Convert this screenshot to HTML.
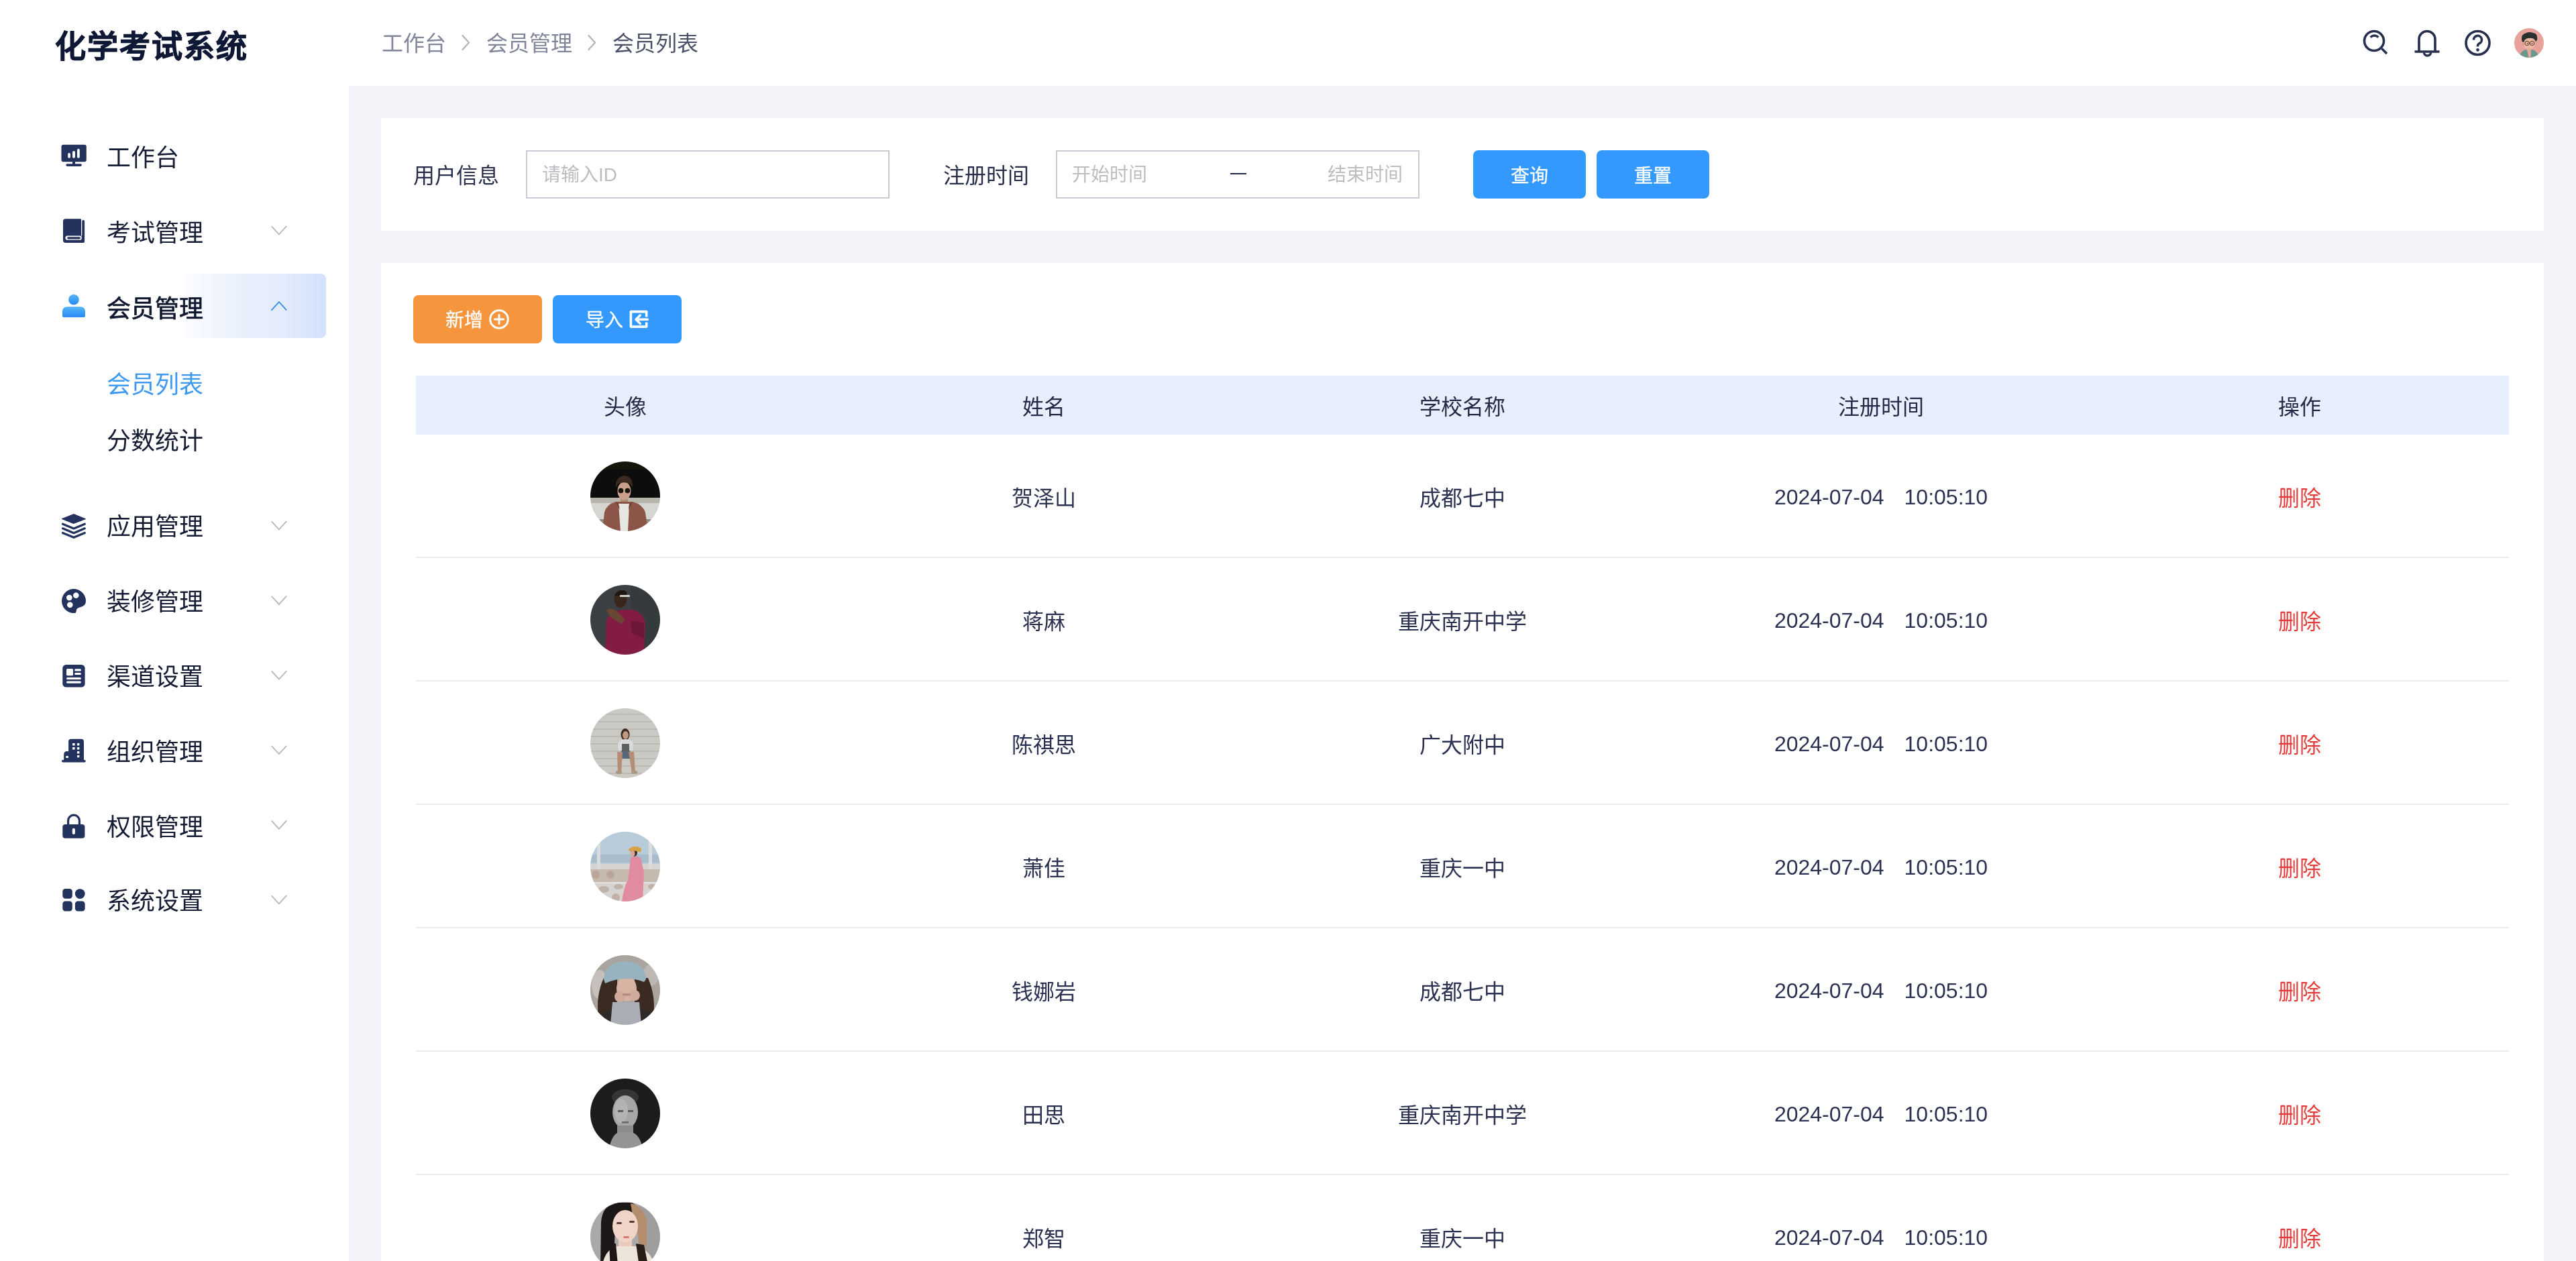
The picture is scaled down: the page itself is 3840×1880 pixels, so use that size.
<!DOCTYPE html>
<html lang="zh-CN">
<head>
<meta charset="utf-8">
<style>
*{box-sizing:border-box;margin:0;padding:0}
html,body{width:3840px;height:1880px;overflow:hidden;background:#fff}
body{position:relative;font-family:"Liberation Sans",sans-serif;color:#1b2238}
.t{position:absolute;white-space:nowrap;line-height:1}
.c{position:absolute;white-space:nowrap;line-height:1;text-align:center}
#main{position:absolute;left:520px;top:128px;width:3320px;height:1752px;background:#f2f3f9}
.card{position:absolute;background:#fff}
.logo{left:81.5px;top:45.5px;font-size:46px;letter-spacing:2px;font-weight:700;color:#0f1936;-webkit-text-stroke:0.9px #0f1936}
.bc{top:49px;font-size:32px;color:#80859a}
.menu{left:158.5px;font-size:36px;color:#141b33}
.lbl{font-size:32px;color:#282e4a;top:245.5px}
.inp{position:absolute;top:224px;height:72px;width:542px;border:2px solid #c9cbd1;background:#fff}
.ph{font-size:28px;color:#bcbdc1;top:247px}
.btn{position:absolute;height:72px;border-radius:8px}
.bt{font-size:28px;color:#fff;-webkit-text-stroke:0.3px #fff}
.th{font-size:32px;color:#252b47;top:590.5px;width:624px}
.td{font-size:32px;color:#2b3150;width:624px}
.del{color:#e23b3b}
.line{position:absolute;left:620px;width:3120px;height:2px;background:#e9eaee}
svg{position:absolute;overflow:visible}
</style>
</head>
<body><div style="position:absolute;left:0;top:0;width:3840px;height:1880px;will-change:transform">
<div id="main"></div>
<div class="card" style="left:568px;top:176px;width:3224px;height:168px"></div>
<div class="card" style="left:568px;top:392px;width:3224px;height:1488px"></div>

<div class="t logo">化学考试系统</div>
<div class="t bc" style="left:569px">工作台</div>
<div class="t bc" style="left:725px">会员管理</div>
<div class="t bc" style="left:912.5px;color:#4a5167">会员列表</div>
<svg style="left:0;top:0" width="3840" height="128" viewBox="0 0 3840 128">
<g fill="none" stroke="#b3b6be" stroke-width="2.4" stroke-linecap="round" stroke-linejoin="round">
<path d="M689.5 53 L699 63.5 L689.5 74"/>
<path d="M877.5 53 L887 63.5 L877.5 74"/>
</g>
<g fill="none" stroke="#262f4d" stroke-width="3.6" stroke-linecap="butt" stroke-linejoin="round">
<circle cx="3539" cy="61" r="14.5"/>
<path d="M3550.5 72.5 L3558 80"/>
<path d="M3533.5 55.5 Q3539.5 50.5 3545.5 55.5" stroke-width="3.5"/>
<path d="M3606 76 V58.5 A12 12 0 0 1 3630 58.5 V76"/>
<path d="M3599.5 77 H3636.5"/>
<path d="M3613.5 78.5 A5 4.5 0 0 0 3623.5 78.5" stroke-width="3.5"/>
<circle cx="3693.5" cy="64" r="17.5"/>
<path d="M3687.5 59.5 A6 6 0 1 1 3695.5 65 Q3693.5 66 3693.5 68.5 V69.5" stroke-width="3.6"/>
</g>
<circle cx="3693.5" cy="74.3" r="2.4" fill="#262f4d"/>
</svg>
<svg style="left:3748px;top:42px" width="44" height="44" viewBox="0 0 44 44">
<defs><clipPath id="hav"><circle cx="22" cy="22" r="22"/></clipPath></defs>
<g clip-path="url(#hav)">
<rect width="44" height="44" fill="#e7a39b"/>
<path d="M7 44 Q9 34 17 32 L27 32 Q35 34 37 44 Z" fill="#6a988a"/>
<path d="M19 32 L21.5 44 L24.5 44 L25 32 Z" fill="#eaa7a0"/>
<ellipse cx="22" cy="23" rx="8.5" ry="9" fill="#eeb8a2"/>
<rect x="19" y="29" width="6" height="4" fill="#e8ae98"/>
<ellipse cx="13.5" cy="24" rx="1.6" ry="2.2" fill="#e29a86"/>
<path d="M11 17 Q10 9 17 7.5 Q22 5 28 7 Q34 8 34 13 Q35 18 32 20 Q30 15 26 15 Q20 14 16 17 L14 21 Q11 20 11 17 Z" fill="#283130"/>
<g fill="none" stroke="#3a2a24" stroke-width="0.9"><circle cx="19" cy="22.5" r="3.2"/><circle cx="26.5" cy="22.5" r="3.2"/><path d="M22.2 22.3 H23.3"/></g>
<circle cx="19.5" cy="22.8" r="0.8" fill="#2a1a14"/><circle cx="26.5" cy="22.8" r="0.8" fill="#2a1a14"/>
</g></svg>
<div style="position:absolute;left:268px;top:408px;width:218px;height:96px;border-radius:0 8px 8px 0;background:linear-gradient(90deg,#ffffff 0%,#f5f8fe 15%,#e9f0fc 42%,#e2ebfc 72%,#d3e1fa 100%)"></div>
<div class="t menu" style="top:218.0px">工作台</div>
<div class="t menu" style="top:330.0px">考试管理</div>
<div class="t menu" style="top:442.5px;-webkit-text-stroke:0.7px #141b33;color:#101830">会员管理</div>
<div class="t menu" style="top:768.0px">应用管理</div>
<div class="t menu" style="top:879.5px">装修管理</div>
<div class="t menu" style="top:992.2px">渠道设置</div>
<div class="t menu" style="top:1103.9px">组织管理</div>
<div class="t menu" style="top:1216.2px">权限管理</div>
<div class="t menu" style="top:1325.7px">系统设置</div>
<div class="t menu" style="top:556.2px;color:#3d98ef">会员列表</div>
<div class="t menu" style="top:640.0px">分数统计</div>
<svg style="left:0;top:0" width="520" height="1400" viewBox="0 0 520 1400">
<defs><linearGradient id="pg" x1="0" y1="0" x2="0" y2="1"><stop offset="0" stop-color="#55b6f6"/><stop offset="1" stop-color="#2889f4"/></linearGradient></defs>
<g fill="#24325e">
<!-- monitor -->
<rect x="91.5" y="215.7" width="37.3" height="25.5" rx="3"/>
<rect x="108" y="240" width="4" height="5"/>
<rect x="98.3" y="244.3" width="23.6" height="3.6" rx="1.8"/>
</g>
<g fill="#fff">
<rect x="101.2" y="228" width="3.8" height="7.7" rx="1.9"/>
<rect x="108" y="225" width="4" height="10.7" rx="2"/>
<rect x="115" y="221.7" width="3.8" height="14" rx="1.9"/>
</g>
<!-- book -->
<g fill="#24325e">
<path d="M98 326.2 H119.8 Q121 326.2 121 327.4 V352 H98 Q94 352 94 356 V330.2 Q94 326.2 98 326.2 Z"/>
<path d="M122.3 329.7 Q122.3 328 124.2 328 Q126.1 328 126.1 329.9 V360 Q126.1 362 124.1 362 H98 Q94 362 94 358 V352 L98 351.6 H122.3 Z"/>
</g>
<rect x="97.5" y="351.5" width="24.4" height="6.3" rx="3.1" fill="#fff"/>
<rect x="100.2" y="353.2" width="19.8" height="3.2" rx="1.6" fill="#24325e"/>
<!-- person -->
<circle cx="110" cy="446.8" r="7.8" fill="url(#pg)"/>
<path d="M100.5 457.2 H119.5 Q127 457.2 127 465 V471 Q127 473 125 473 H95 Q93 473 93 471 V465 Q93 457.2 100.5 457.2 Z" fill="url(#pg)"/>
<!-- layers -->
<g fill="#24325e">
<path d="M92.2 773.5 L110 766.6 L127.6 773.7 L109.6 780.6 Z" stroke="#24325e" stroke-width="1" stroke-linejoin="round"/>
</g>
<g fill="none" stroke="#24325e" stroke-width="3.2" stroke-linecap="round" stroke-linejoin="round">
<path d="M93.5 781.2 L110 788 L126.3 781.2"/>
<path d="M93.5 787.8 L110 794.7 L126.3 787.8"/>
<path d="M93.5 794.5 L110 801.3 L126.3 794.5"/>
</g>
<!-- palette -->
<path fill="#24325e" fill-rule="evenodd" d="M112.8 913.8 A18 18 0 1 1 128 896.3 Q127.8 903.5 119.5 905.2 Q114.8 906.3 114 909.5 Q113.6 912 112.8 913.8 Z M103.3 886.7 a4.3 4.3 0 1 0 0.01 0 Z M113.3 883.3 a4.3 4.3 0 1 0 0.01 0 Z M104.3 897.4 a4.3 4.3 0 1 0 0.01 0 Z"/>
<!-- newspaper -->
<rect x="93.3" y="991" width="33.3" height="33.6" rx="5.2" fill="#24325e"/>
<g fill="#fff">
<rect x="99" y="997" width="10" height="10.3" rx="1.6"/>
<rect x="111.2" y="997.3" width="9.7" height="3.1" rx="1.5"/>
<rect x="111.2" y="1003.1" width="9.7" height="3" rx="1.5"/>
<rect x="99" y="1009.9" width="21.9" height="3.1" rx="1.5"/>
<rect x="99" y="1015.4" width="21.9" height="3.3" rx="1.6"/>
</g>
<!-- building -->
<g fill="#24325e">
<path d="M106 1101.7 H121 Q125 1101.7 125 1105.7 V1135 H102.1 V1105.7 Q102.1 1101.7 106 1101.7 Z"/>
<path d="M100.2 1120 Q102.6 1120 103 1121 V1135 H95.2 V1125 Q95.2 1120 100.2 1120 Z"/>
<rect x="91.9" y="1133" width="35.9" height="3.6" rx="1.8"/>
</g>
<g fill="#fff">
<rect x="108" y="1108" width="3.6" height="3.6" rx="0.5"/>
<rect x="115" y="1108" width="3.4" height="3.6" rx="0.5"/>
<rect x="108" y="1114" width="3.6" height="3.6" rx="0.5"/>
<rect x="115" y="1114" width="3.4" height="3.6" rx="0.5"/>
<rect x="115" y="1120" width="3.4" height="3.4" rx="0.5"/>
<rect x="115" y="1126" width="3.4" height="3.3" rx="0.5"/>
<rect x="98.3" y="1126.9" width="3.6" height="3.2" rx="0.5"/>
</g>
<!-- lock -->
<rect x="93.3" y="1229.1" width="33.1" height="20.7" rx="4" fill="#24325e"/>
<path d="M101.6 1230 V1223.5 A8.4 8.4 0 0 1 118.4 1223.5 V1230" fill="none" stroke="#24325e" stroke-width="3.2"/>
<rect x="107.8" y="1234.8" width="4.1" height="9.1" rx="2" fill="#fff"/>
<!-- grid -->
<g fill="#24325e">
<rect x="93.3" y="1325.1" width="14.5" height="14.7" rx="4.2"/>
<circle cx="119.25" cy="1332.55" r="7.4"/>
<rect x="93.3" y="1343.6" width="14.5" height="15" rx="4.2"/>
<rect x="111.9" y="1343.6" width="14.7" height="15" rx="4.2"/>
</g>
<!-- chevrons -->
<g fill="none" stroke="#b9babf" stroke-width="1.9" stroke-linecap="round" stroke-linejoin="round">
<path d="M405.3 337.8 L415.9 349.4 L426.7 337.6"/>
<path d="M405.3 777.8 L415.9 789.4 L426.7 777.6"/>
<path d="M405.3 889.4 L415.9 901.0 L426.7 889.2"/>
<path d="M405.3 1001.0 L415.9 1012.6 L426.7 1000.8"/>
<path d="M405.3 1112.6 L415.9 1124.2 L426.7 1112.4"/>
<path d="M405.3 1224.2 L415.9 1235.8 L426.7 1224.0"/>
<path d="M405.3 1335.8 L415.9 1347.4 L426.7 1335.6"/>
</g>
<path d="M405 462.2 L416 450.2 L426.6 461.9" fill="none" stroke="#3b90e8" stroke-width="1.9" stroke-linecap="round" stroke-linejoin="round"/>
</svg>
<div class="t lbl" style="left:616px">用户信息</div>
<div class="inp" style="left:784px"></div>
<div class="t ph" style="left:808px">请输入ID</div>
<div class="t lbl" style="left:1406px">注册时间</div>
<div class="inp" style="left:1574px"></div>
<div class="t ph" style="left:1598px">开始时间</div>
<div class="t ph" style="left:1979px">结束时间</div>
<div style="position:absolute;left:1834px;top:258px;width:24px;height:2px;background:#22284a"></div>
<div class="btn" style="left:2196px;top:224px;width:168px;background:#3399fd"></div>
<div class="c bt" style="left:2196px;top:249px;width:168px">查询</div>
<div class="btn" style="left:2380px;top:224px;width:168px;background:#3399fd"></div>
<div class="c bt" style="left:2380px;top:249px;width:168px">重置</div>
<div class="btn" style="left:616px;top:440px;width:192px;background:#f5963e"></div>
<div class="t bt" style="left:664px;top:464.3px">新增</div>
<div class="btn" style="left:824px;top:440px;width:192px;background:#3399fd"></div>
<div class="t bt" style="left:873px;top:464.3px">导入</div>
<svg style="left:0;top:0" width="1100" height="600" viewBox="0 0 1100 600">
<g fill="none" stroke="#fff" stroke-width="3" stroke-linecap="round" stroke-linejoin="round">
<circle cx="744" cy="476" r="13.3"/>
<path d="M744 469.5 V482.5 M737.5 476 H750.5"/>
<path d="M963.7 472.5 V464.6 H940.4 V487.1 H963.7 V480.5" stroke-width="3.6" stroke-linecap="butt"/>
<path d="M965.5 476.3 H948 M954.3 470 L948 476.3 L954.3 482.5" stroke-width="3.4"/>
</g></svg>
<div style="position:absolute;left:620px;top:560px;width:3120px;height:88px;background:#e8effc"></div>
<div class="c th" style="left:620px">头像</div>
<div class="c th" style="left:1244px">姓名</div>
<div class="c th" style="left:1868px">学校名称</div>
<div class="c th" style="left:2492px">注册时间</div>
<div class="c th" style="left:3116px">操作</div>
<div class="c td" style="left:1244px;top:726.5px">贺泽山</div>
<div class="c td" style="left:1868px;top:726.5px">成都七中</div>
<div class="c td" style="left:2492px;top:726.5px"><span style="position:relative;top:-2px">2024-07-04<span style="display:inline-block;width:30px"></span>10:05:10</span></div>
<div class="c td del" style="left:3116px;top:726.5px">删除</div>
<div class="line" style="top:830px"></div>
<div style="position:absolute;left:880px;top:688px;width:104px;height:104px;border-radius:52px;overflow:hidden"><svg width="104" height="104" viewBox="0 0 104 104" style="position:absolute;left:0;top:0"><defs><filter id="bl0" x="-5%" y="-5%" width="110%" height="110%"><feGaussianBlur stdDeviation="0.7"/></filter></defs><g filter="url(#bl0)"><rect width="104" height="104" fill="#0a0a07"/>
<rect y="0" width="104" height="12" fill="#13130e"/>
<rect y="54" width="104" height="8" fill="#b7b4aa"/>
<rect y="62" width="104" height="24" fill="#d5d5d2"/>
<rect y="86" width="104" height="18" fill="#8f8c84"/>
<rect x="45" y="50" width="11" height="12" fill="#b48b77"/>
<ellipse cx="50.5" cy="44" rx="10" ry="13.5" fill="#c8a08b"/>
<path d="M38 40 Q36 24 50 21 Q64 22 63 38 L60 34 Q52 29 41 33 Z" fill="#3a2a20"/>
<circle cx="45.5" cy="43.5" r="3.8" fill="#171310"/><circle cx="55.5" cy="43.5" r="3.8" fill="#171310"/>
<path d="M18 104 L21 76 Q24 64 38 60 L63 60 Q78 64 82 76 L86 104 Z" fill="#8b5646"/>
<path d="M42 63 L58 63 L56 104 L45 104 Z" fill="#e6e6e3"/>
<path d="M38 60 L44 72 L42 63 Z M63 60 L57 72 L58 63 Z" fill="#6e3f32"/></g></svg></div>
<div class="c td" style="left:1244px;top:910.5px">蒋麻</div>
<div class="c td" style="left:1868px;top:910.5px">重庆南开中学</div>
<div class="c td" style="left:2492px;top:910.5px"><span style="position:relative;top:-2px">2024-07-04<span style="display:inline-block;width:30px"></span>10:05:10</span></div>
<div class="c td del" style="left:3116px;top:910.5px">删除</div>
<div class="line" style="top:1014px"></div>
<div style="position:absolute;left:880px;top:872px;width:104px;height:104px;border-radius:52px;overflow:hidden"><svg width="104" height="104" viewBox="0 0 104 104" style="position:absolute;left:0;top:0"><defs><filter id="bl1" x="-5%" y="-5%" width="110%" height="110%"><feGaussianBlur stdDeviation="0.7"/></filter></defs><g filter="url(#bl1)"><rect width="104" height="104" fill="#3a4144"/>
<rect x="60" width="44" height="104" fill="#353b3e"/>
<path d="M22 104 L24 52 Q30 40 46 37 L64 37 Q80 42 82 58 L80 104 Z" fill="#821c43"/>
<path d="M60 55 Q72 52 80 58 L80 80 L62 72 Z" fill="#6d1837"/>
<ellipse cx="45" cy="21" rx="9.5" ry="13" fill="#3b271d"/>
<path d="M36 16 Q40 8 50 8 Q56 10 54 16 Z" fill="#1e1410"/>
<path d="M24 38 Q30 33 38 38 L52 52 L46 58 L30 48 Z" fill="#6b4634"/>
<rect x="44" y="15" width="15" height="3" rx="1" fill="#cfcfcf"/></g></svg></div>
<div class="c td" style="left:1244px;top:1094.5px">陈祺思</div>
<div class="c td" style="left:1868px;top:1094.5px">广大附中</div>
<div class="c td" style="left:2492px;top:1094.5px"><span style="position:relative;top:-2px">2024-07-04<span style="display:inline-block;width:30px"></span>10:05:10</span></div>
<div class="c td del" style="left:3116px;top:1094.5px">删除</div>
<div class="line" style="top:1198px"></div>
<div style="position:absolute;left:880px;top:1056px;width:104px;height:104px;border-radius:52px;overflow:hidden"><svg width="104" height="104" viewBox="0 0 104 104" style="position:absolute;left:0;top:0"><defs><filter id="bl2" x="-5%" y="-5%" width="110%" height="110%"><feGaussianBlur stdDeviation="0.7"/></filter></defs><g filter="url(#bl2)"><rect width="104" height="104" fill="#cbc9c4"/>
<g fill="#bcb9b3"><rect y="8" width="104" height="2"/><rect y="19" width="104" height="2"/><rect y="30" width="104" height="2"/><rect y="41" width="104" height="2"/><rect y="52" width="104" height="2"/><rect y="63" width="104" height="2"/><rect y="74" width="104" height="2"/><rect y="85" width="104" height="2"/><rect y="96" width="104" height="2"/></g>
<ellipse cx="52" cy="39" rx="6.5" ry="9" fill="#3b2c22"/>
<ellipse cx="52.5" cy="40" rx="4.5" ry="6" fill="#c39a80"/>
<path d="M41 53 Q44 46 52 46 Q61 46 64 53 L63 63 L42 63 Z" fill="#dadbdc"/>
<rect x="47" y="53" width="11" height="10" fill="#5e625b"/>
<rect x="46" y="63" width="13" height="12" fill="#56697a"/>
<path d="M40 65 L48 65 L46 96 L41 96 Z" fill="#b58d74"/>
<path d="M57 65 L65 65 L67 96 L62 96 Z" fill="#b58d74"/>
<rect x="38" y="93" width="9" height="5" rx="2" fill="#a99a84"/>
<rect x="61" y="93" width="9" height="5" rx="2" fill="#a99a84"/></g></svg></div>
<div class="c td" style="left:1244px;top:1278.5px">萧佳</div>
<div class="c td" style="left:1868px;top:1278.5px">重庆一中</div>
<div class="c td" style="left:2492px;top:1278.5px"><span style="position:relative;top:-2px">2024-07-04<span style="display:inline-block;width:30px"></span>10:05:10</span></div>
<div class="c td del" style="left:3116px;top:1278.5px">删除</div>
<div class="line" style="top:1382px"></div>
<div style="position:absolute;left:880px;top:1240px;width:104px;height:104px;border-radius:52px;overflow:hidden"><svg width="104" height="104" viewBox="0 0 104 104" style="position:absolute;left:0;top:0"><defs><filter id="bl3" x="-5%" y="-5%" width="110%" height="110%"><feGaussianBlur stdDeviation="0.7"/></filter></defs><g filter="url(#bl3)"><rect width="104" height="104" fill="#d6d3d1"/>
<rect width="104" height="48" fill="#b8cbd9"/>
<rect y="34" width="104" height="12" fill="#a8bccb"/>
<rect x="10" y="15" width="5" height="50" fill="#dadbdc"/>
<rect x="87" y="15" width="5" height="50" fill="#dadbdc"/>
<rect y="56" width="104" height="20" fill="#c6b9ae"/>
<rect y="75" width="104" height="2" fill="#e4e4e4"/>
<g fill="#b09888" opacity="0.55"><ellipse cx="20" cy="86" rx="8" ry="5"/><ellipse cx="42" cy="82" rx="7" ry="4"/><ellipse cx="38" cy="98" rx="6" ry="6"/><ellipse cx="92" cy="82" rx="6" ry="4"/><ellipse cx="8" cy="64" rx="6" ry="6"/><ellipse cx="30" cy="64" rx="6" ry="6"/></g>
<path d="M60 39 Q67 35 75 39 L80 60 L78 104 L47 104 Q50 82 56 72 L58 58 Z" fill="#e18ba1"/>
<ellipse cx="65" cy="31" rx="5" ry="6" fill="#3a2520"/>
<ellipse cx="63" cy="32.5" rx="3.5" ry="5" fill="#d7a89a"/>
<path d="M57 26 Q66 18 76 25 L75 31 Q66 27 57 29 Z" fill="#d9a246"/></g></svg></div>
<div class="c td" style="left:1244px;top:1462.5px">钱娜岩</div>
<div class="c td" style="left:1868px;top:1462.5px">成都七中</div>
<div class="c td" style="left:2492px;top:1462.5px"><span style="position:relative;top:-2px">2024-07-04<span style="display:inline-block;width:30px"></span>10:05:10</span></div>
<div class="c td del" style="left:3116px;top:1462.5px">删除</div>
<div class="line" style="top:1566px"></div>
<div style="position:absolute;left:880px;top:1424px;width:104px;height:104px;border-radius:52px;overflow:hidden"><svg width="104" height="104" viewBox="0 0 104 104" style="position:absolute;left:0;top:0"><defs><filter id="bl4" x="-5%" y="-5%" width="110%" height="110%"><feGaussianBlur stdDeviation="0.7"/></filter></defs><g filter="url(#bl4)"><rect width="104" height="104" fill="#aaa49e"/>
<ellipse cx="14" cy="44" rx="12" ry="22" fill="#c5c0bb"/>
<ellipse cx="90" cy="30" rx="12" ry="16" fill="#bdb8b3"/>
<path d="M12 92 Q8 60 20 34 L40 34 L40 90 Z" fill="#3b2a22"/>
<path d="M66 34 L86 34 Q98 62 94 92 L66 92 Z" fill="#3b2a22"/>
<path d="M14 104 L20 84 L40 80 L38 104 Z" fill="#2d2b2b"/>
<path d="M66 80 L88 84 L92 104 L66 104 Z" fill="#2f2a28"/>
<ellipse cx="54" cy="50" rx="15" ry="19" fill="#d7b3a3"/>
<path d="M20 36 Q22 10 52 9 Q82 11 83 36 L80 40 Q52 29 22 42 Z" fill="#98b3c0"/>
<path d="M30 104 L33 70 L73 70 L76 104 Z" fill="#aaaeb4"/>
<ellipse cx="44" cy="62" rx="8" ry="8" fill="#d0aa9a"/>
<ellipse cx="66" cy="60" rx="8" ry="8" fill="#d0aa9a"/>
<rect x="48" y="57" width="12" height="3.5" rx="1.7" fill="#b98b82"/></g></svg></div>
<div class="c td" style="left:1244px;top:1646.5px">田思</div>
<div class="c td" style="left:1868px;top:1646.5px">重庆南开中学</div>
<div class="c td" style="left:2492px;top:1646.5px"><span style="position:relative;top:-2px">2024-07-04<span style="display:inline-block;width:30px"></span>10:05:10</span></div>
<div class="c td del" style="left:3116px;top:1646.5px">删除</div>
<div class="line" style="top:1750px"></div>
<div style="position:absolute;left:880px;top:1608px;width:104px;height:104px;border-radius:52px;overflow:hidden"><svg width="104" height="104" viewBox="0 0 104 104" style="position:absolute;left:0;top:0"><defs><filter id="bl5" x="-5%" y="-5%" width="110%" height="110%"><feGaussianBlur stdDeviation="0.7"/></filter></defs><g filter="url(#bl5)"><rect width="104" height="104" fill="#1c1c1c"/>
<ellipse cx="52" cy="28" rx="20" ry="12" fill="#343434"/>
<ellipse cx="52" cy="50" rx="19" ry="25" fill="#a6a6a6"/>
<ellipse cx="46" cy="48" rx="10" ry="18" fill="#b3b3b3"/>
<rect x="40" y="70" width="24" height="14" fill="#8c8c8c"/>
<path d="M28 104 Q32 84 42 80 L62 80 Q74 84 78 104 Z" fill="#949494"/>
<rect x="41" y="47" width="8" height="3" fill="#5a5a5a"/><rect x="56" y="47" width="8" height="3" fill="#5a5a5a"/>
<rect x="47" y="64" width="10" height="2.5" fill="#666"/></g></svg></div>
<div class="c td" style="left:1244px;top:1830.5px">郑智</div>
<div class="c td" style="left:1868px;top:1830.5px">重庆一中</div>
<div class="c td" style="left:2492px;top:1830.5px"><span style="position:relative;top:-2px">2024-07-04<span style="display:inline-block;width:30px"></span>10:05:10</span></div>
<div class="c td del" style="left:3116px;top:1830.5px">删除</div>
<div class="line" style="top:1934px"></div>
<div style="position:absolute;left:880px;top:1792px;width:104px;height:104px;border-radius:52px;overflow:hidden"><svg width="104" height="104" viewBox="0 0 104 104" style="position:absolute;left:0;top:0"><defs><filter id="bl6" x="-5%" y="-5%" width="110%" height="110%"><feGaussianBlur stdDeviation="0.7"/></filter></defs><g filter="url(#bl6)"><rect width="104" height="104" fill="#aba9a7"/>
<rect x="72" width="32" height="104" fill="#a09e9c"/>
<path d="M15 104 L16 30 Q18 4 40 1 L62 1 Q70 4 66 14 L38 20 L34 104 Z" fill="#1f1613"/>
<path d="M60 2 Q80 6 84 30 L84 66 L72 62 Q70 30 62 14 Z" fill="#b38d6c"/>
<rect x="42" y="50" width="20" height="18" fill="#e9cabc"/><ellipse cx="52" cy="36" rx="19" ry="24" fill="#efd4c7"/>
<rect x="39" y="30" width="8" height="3" rx="1.5" fill="#5a3a30"/><rect x="58" y="28" width="8" height="3" rx="1.5" fill="#5a3a30"/>
<rect x="49" y="51" width="9" height="3" rx="1.5" fill="#d47a74"/>
<path d="M16 104 Q20 70 40 66 L68 66 Q92 70 98 104 Z" fill="#ece4d9"/>
<path d="M28 60 L38 62 L42 104 L30 104 Z" fill="#1f1613"/>
<path d="M68 62 L80 64 L88 104 L74 104 Z" fill="#2a1e18"/></g></svg></div>
</div><script>(function(){var w=window.innerWidth;if(w&&Math.abs(w-3840)>2){document.documentElement.style.zoom=(w/3840);}})();</script>
</body></html>
